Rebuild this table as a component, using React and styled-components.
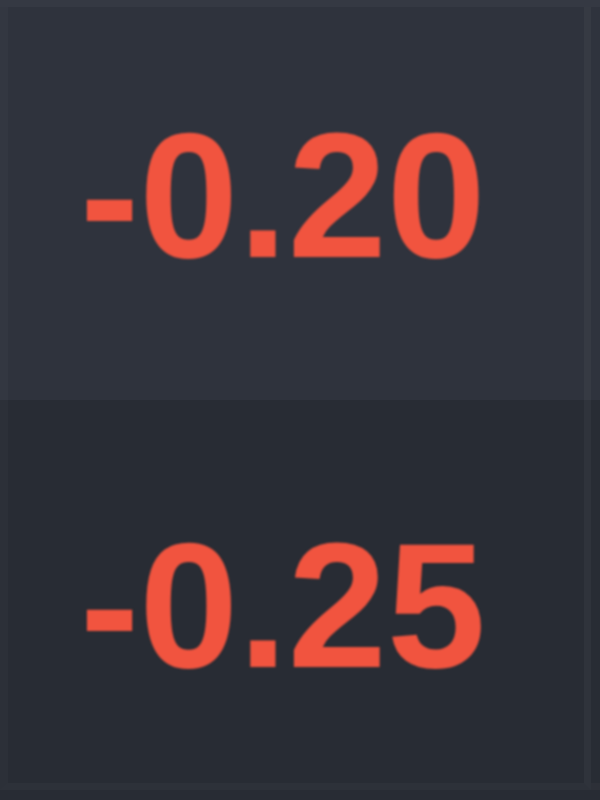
import React from "react";
import styled, { createGlobalStyle } from "styled-components";

const Global = createGlobalStyle`
  html, body {
    margin: 0;
    padding: 0;
    background: #282c34;
  }
  #root {
    width: 600px;
    height: 800px;
  }
`;

const Table = styled.div`
  width: 600px;
  height: 800px;
  overflow: hidden;
  display: flex;
  flex-direction: column;
  background: #282c34;
`;

const Row = styled.div`
  box-sizing: border-box;
  display: flex;
  height: ${(p) => p.$height}px;
  flex: none;
  background: ${(p) => p.$bg};
  border-top: ${(p) => (p.$first ? "7px solid rgba(255,255,255,0.03)" : "none")};
`;

const Cell = styled.div`
  box-sizing: border-box;
  width: 591px;
  flex: none;
  padding: ${(p) => p.$padTop}px 0 0 72px;
  border-left: 8px solid rgba(255, 255, 255, 0.018);
  border-right: 7px solid rgba(255, 255, 255, 0.03);
  border-bottom: ${(p) => (p.$last ? "7px solid rgba(255,255,255,0.025)" : "none")};
`;

const NextCell = styled.div`
  flex: 1;
  border-bottom: ${(p) => (p.$last ? "7px solid rgba(255,255,255,0.025)" : "none")};
`;

const Value = styled.span`
  display: block;
  font-family: "Liberation Sans", Arial, sans-serif;
  font-weight: 700;
  font-size: 178px;
  line-height: 200px;
  color: ${(p) => (p.$negative ? "#f1543f" : "#3fb950")};
  white-space: nowrap;
  filter: blur(1.2px);
`;

const rows = [
  { value: "-0.20", bg: "#2f333d", height: 400, padTop: 89, first: true },
  { value: "-0.25", bg: "#282c34", height: 400, padTop: 106, last: true, tail: 10 },
];

export default function App() {
  return (
    <>
      <Global />
      <Table>
        {rows.map((r) => (
          <Row key={r.value} $bg={r.bg} $height={r.last ? 390 : r.height} $first={r.first}>
            <Cell $padTop={r.padTop} $last={r.last}>
              <Value $negative={r.value.startsWith("-")}>{r.value}</Value>
            </Cell>
            <NextCell $last={r.last} />
          </Row>
        ))}
      </Table>
    </>
  );
}
